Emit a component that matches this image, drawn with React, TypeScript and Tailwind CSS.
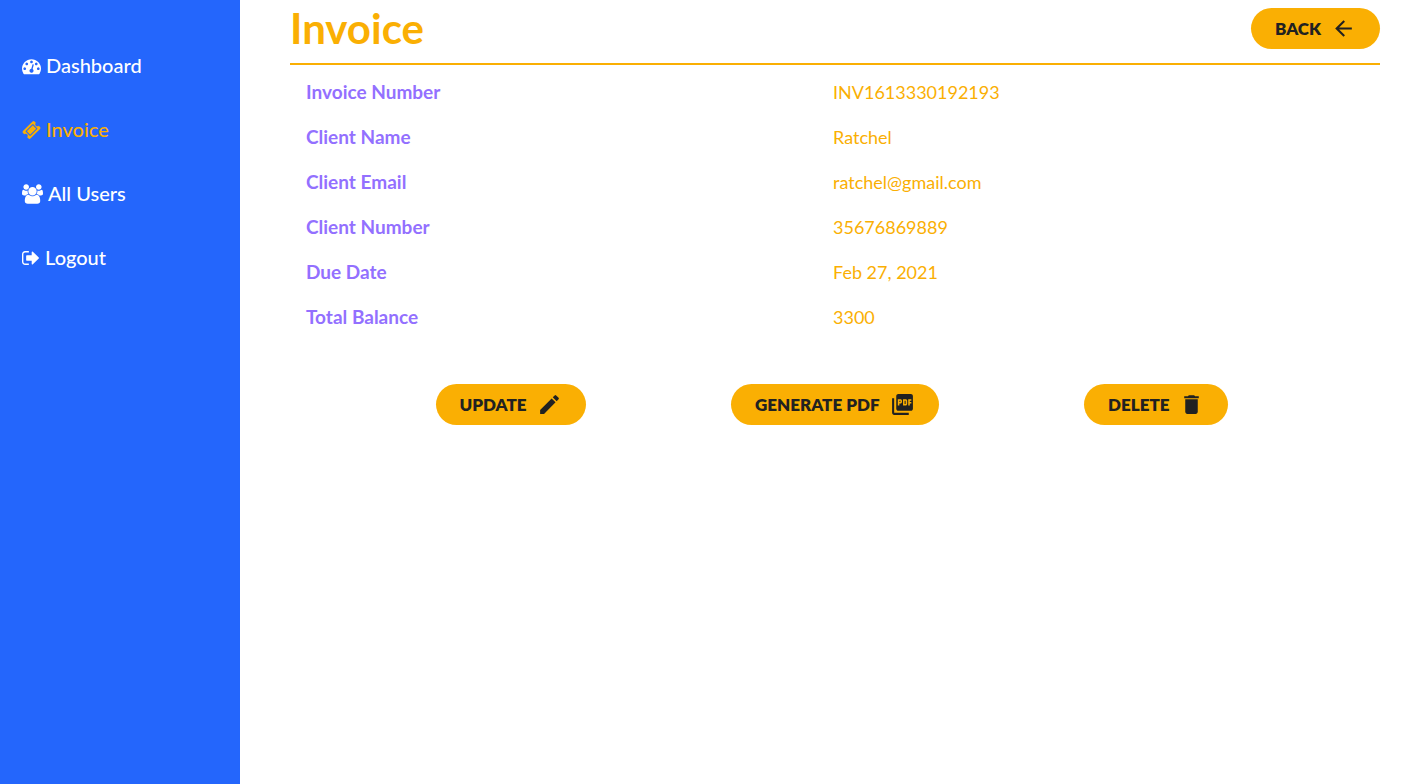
import type { ReactNode } from "react";
import { MdArrowBack, MdDelete, MdEdit, MdPictureAsPdf } from "react-icons/md";

const navItems = [
  {
    label: "Dashboard",
    viewBox: "0 0 1792 1792",
    size: "w-[19px]",
    path: "M384 1152q0-53-37.5-90.5t-90.5-37.5-90.5 37.5-37.5 90.5 37.5 90.5 90.5 37.5 90.5-37.5 37.5-90.5zm192-448q0-53-37.5-90.5t-90.5-37.5-90.5 37.5-37.5 90.5 37.5 90.5 90.5 37.5 90.5-37.5 37.5-90.5zm428 481l101-382q6-26-7.5-48.5t-38.5-29.5-48 6.5-30 39.5l-101 382q-60 5-107 43.5t-63 98.5q-20 77 20 146t117 89 146-20 89-117q16-60-6-117t-72-91zm660-33q0-53-37.5-90.5t-90.5-37.5-90.5 37.5-37.5 90.5 37.5 90.5 90.5 37.5 90.5-37.5 37.5-90.5zm-640-640q0-53-37.5-90.5t-90.5-37.5-90.5 37.5-37.5 90.5 37.5 90.5 90.5 37.5 90.5-37.5 37.5-90.5zm448 192q0-53-37.5-90.5t-90.5-37.5-90.5 37.5-37.5 90.5 37.5 90.5 90.5 37.5 90.5-37.5 37.5-90.5zm320 448q0 261-141 483-19 29-54 29h-1402q-35 0-54-29-141-221-141-483 0-182 71-348t191-286 286-191 348-71 348 71 286 191 191 286 71 348z",
  },
  {
    label: "Invoice",
    active: true,
    viewBox: "0 0 1792 1792",
    size: "w-[19px]",
    path: "M1024 452l316 316-572 572-316-316zm-211 979l618-618q19-19 19-45t-19-45l-362-362q-18-18-45-18t-45 18l-618 618q-19 19-19 45t19 45l362 362q18 18 45 18t45-18zm889-637l-907 908q-37 37-90.5 37t-90.5-37l-126-126q56-56 56-136t-56-136-136-56-136 56l-125-126q-37-37-37-90.5t37-90.5l907-906q37-37 90.5-37t90.5 37l125 125q-56 56-56 136t56 136 136 56 136-56l126 125q37 37 37 90.5t-37 90.5z",
  },
  {
    label: "All Users",
    viewBox: "0 0 1920 1792",
    size: "w-[21px]",
    path: "M593 896q-162 5-265 128h-134q-82 0-138-40.5t-56-118.5q0-353 124-353 6 0 43.5 21t97.5 42.5 119 21.5q67 0 133-23-5 37-5 66 0 139 81 256zm1071 637q0 120-73 189.5t-194 69.5h-874q-121 0-194-69.5t-73-189.5q0-53 3.5-103.5t14-109 26.5-108.5 43-97.5 62-81 85.5-53.5 111.5-20q10 0 43 21.5t73 48 107 48 135 21.5 135-21.5 107-48 73-48 43-21.5q61 0 111.5 20t85.5 53.5 62 81 43 97.5 26.5 108.5 14 109 3.5 103.5zm-1024-1277q0 106-75 181t-181 75-181-75-75-181 75-181 181-75 181 75 75 181zm704 384q0 159-112.5 271.5t-271.5 112.5-271.5-112.5-112.5-271.5 112.5-271.5 271.5-112.5 271.5 112.5 112.5 271.5zm576 225q0 78-56 118.5t-138 40.5h-134q-103-123-265-128 81-117 81-256 0-29-5-66 66 23 133 23 59 0 119-21.5t97.5-42.5 43.5-21q124 0 124 353zm-128-609q0 106-75 181t-181 75-181-75-75-181 75-181 181-75 181 75 75 181z",
  },
  {
    label: "Logout",
    viewBox: "64 0 1664 1792",
    size: "w-[18px]",
    path: "M704 1440q0 4 1 20t.5 26.5-3 23.5-10 19.5-20.5 6.5h-320q-119 0-203.5-84.5t-84.5-203.5v-704q0-119 84.5-203.5t203.5-84.5h320q13 0 22.5 9.5t9.5 22.5q0 4 1 20t.5 26.5-3 23.5-10 19.5-20.5 6.5h-320q-66 0-113 47t-47 113v704q0 66 47 113t113 47h312l11.5 1 11.5 3 8 5.5 7 9 2 13.5zm928-544q0 26-19 45l-544 544q-19 19-45 19t-45-19-19-45v-288h-448q-26 0-45-19t-19-45v-384q0-26 19-45t45-19h448v-288q0-26 19-45t45-19 45 19l544 544q19 19 19 45z",
  },
];

const details = [
  ["Invoice Number", "INV1613330192193"],
  ["Client Name", "Ratchel"],
  ["Client Email", "ratchel@gmail.com"],
  ["Client Number", "35676869889"],
  ["Due Date", "Feb 27, 2021"],
  ["Total Balance", "3300"],
];

function PillButton({ children, icon }: { children: string; icon: ReactNode }) {
  return (
    <button
      type="button"
      className="flex cursor-pointer items-center gap-[10px] rounded-full bg-[#faaf03] px-6 py-2 text-[17px] leading-6 font-extrabold whitespace-nowrap text-[#212121] uppercase"
    >
      {children}
      {icon}
    </button>
  );
}

export default function App() {
  return (
    <div className="flex min-h-screen bg-white font-['Lato',sans-serif]">
      <aside className="w-60 shrink-0 bg-[#2466fc] pt-[34px]">
        <nav>
          <ul>
            {navItems.map((item) => (
              <li key={item.label}>
                <a
                  href="#"
                  aria-current={item.active ? "page" : undefined}
                  className={`flex h-16 items-center gap-[5px] pl-[22px] text-[20px] font-medium ${
                    item.active ? "text-[#faaf03]" : "text-white"
                  }`}
                >
                  <svg viewBox={item.viewBox} className={`h-5 ${item.size}`} fill="currentColor" aria-hidden="true">
                    <path d={item.path} />
                  </svg>
                  <span className="pb-0.5">{item.label}</span>
                </a>
              </li>
            ))}
          </ul>
        </nav>
      </aside>

      <main className="min-w-0 flex-1 pr-7 pl-[50px]">
        <header className="flex items-start justify-between border-b-2 border-[#faaf03] pt-2 pb-[14px]">
          <h1 className="text-[42px] leading-10 font-bold text-[#faaf03]">Invoice</h1>
          <PillButton icon={<MdArrowBack className="size-[25px]" />}>Back</PillButton>
        </header>

        <dl className="mt-[5px] pr-5 pl-4 text-[18px]">
          {details.map(([label, value]) => (
            <div key={label} className="grid h-[45px] grid-cols-2 items-center">
              <dt className="text-[19px] font-bold text-[#9370ff]">{label}</dt>
              <dd className="text-[#faaf03]">{value}</dd>
            </div>
          ))}
        </dl>

        <div className="mt-11 flex justify-evenly pr-1.5">
          <PillButton icon={<MdEdit className="size-[25px]" />}>Update</PillButton>
          <PillButton icon={<MdPictureAsPdf className="size-[25px]" />}>Generate PDF</PillButton>
          <PillButton icon={<MdDelete className="size-[25px]" />}>Delete</PillButton>
        </div>
      </main>
    </div>
  );
}
